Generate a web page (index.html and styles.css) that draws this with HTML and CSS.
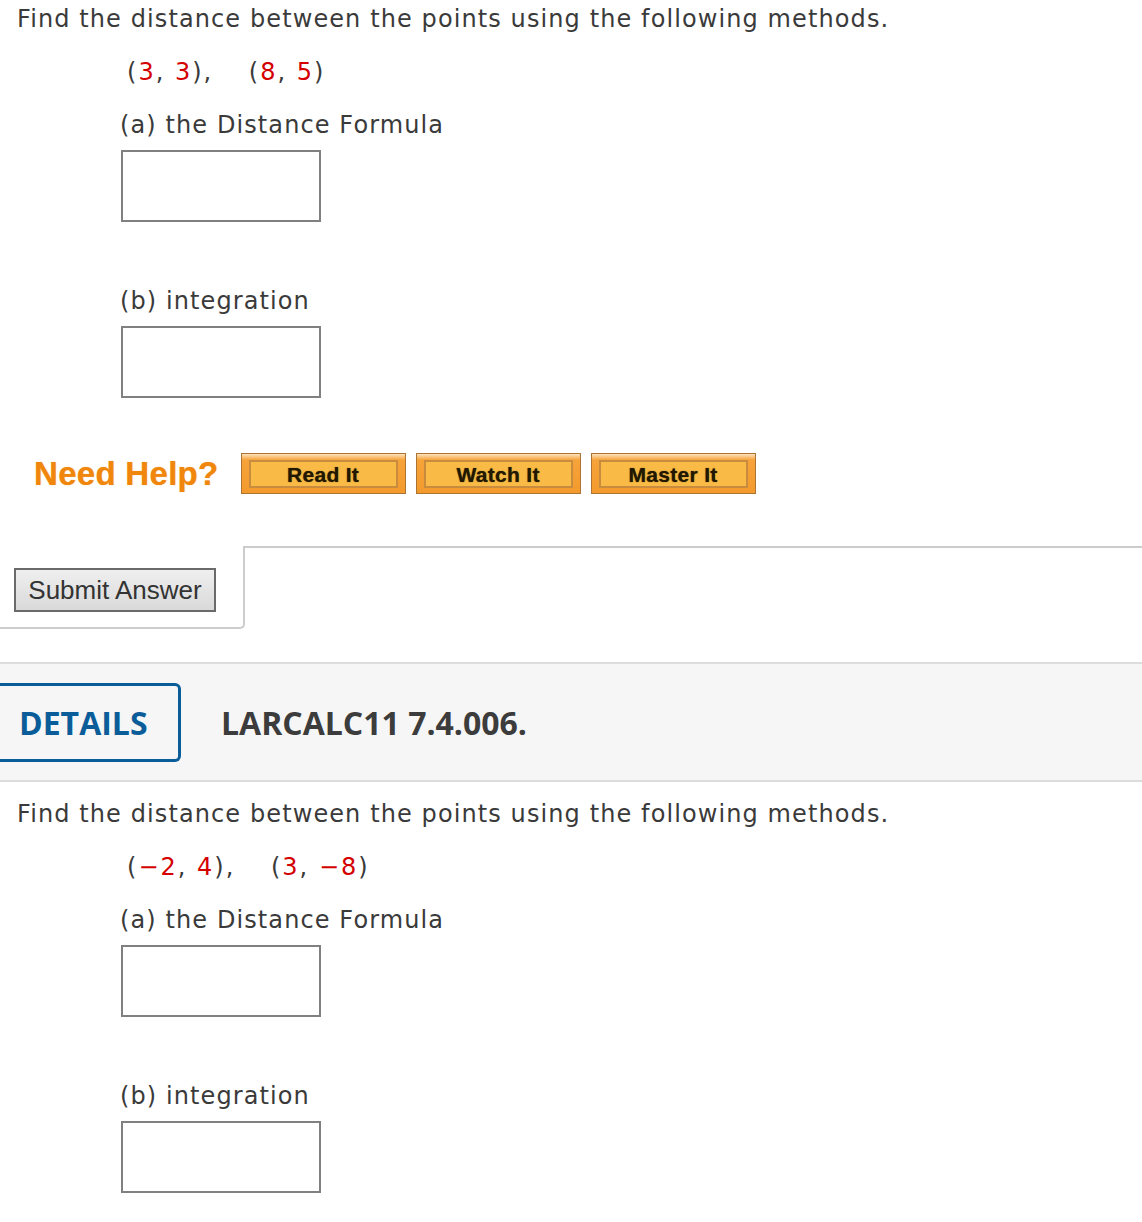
FILE: index.html
```html
<!DOCTYPE html>
<html lang="en">
<head>
  <meta charset="UTF-8" />
  <meta name="viewport" content="width=device-width, initial-scale=1.0" />
  <title>LARCALC11 7.4</title>
  <link rel="stylesheet" href="styles.css">
</head>
<body>
  <div class="question">
    <p class="prompt">Find the distance between the points using the following methods.</p>
    <div class="work">
      <p class="points">
        <span class="point">(<span class="num">3</span>, <span class="num">3</span>),</span>
        <span class="point">(<span class="num">8</span>, <span class="num">5</span>)</span>
      </p>
      <p class="part first">(a) the Distance Formula</p>
      <input type="text" class="answer" />
      <p class="part">(b) integration</p>
      <input type="text" class="answer" />
    </div>

    <div class="help">
      <span class="help-label">Need Help?</span>
      <button class="help-btn"><span>Read It</span></button>
      <button class="help-btn"><span>Watch It</span></button>
      <button class="help-btn"><span>Master It</span></button>
    </div>
  </div>

  <div class="submit-row">
    <div class="submit-cell">
      <button class="submit">Submit Answer</button>
    </div>
    <div class="submit-rest"></div>
  </div>

  <div class="question-head">
    <div class="details">DETAILS</div>
    <div class="qid">LARCALC11 7.4.006.</div>
  </div>

  <div class="question second">
    <p class="prompt">Find the distance between the points using the following methods.</p>
    <div class="work">
      <p class="points">
        <span class="point">(<span class="num">&minus;2</span>, <span class="num">4</span>),</span>
        <span class="point">(<span class="num">3</span>, <span class="num">&minus;8</span>)</span>
      </p>
      <p class="part first">(a) the Distance Formula</p>
      <input type="text" class="answer" />
      <p class="part">(b) integration</p>
      <input type="text" class="answer" />
    </div>
  </div>
</body>
</html>
```

FILE: styles.css
```css
body {
  margin: 0;
  font-family: "DejaVu Sans", Verdana, sans-serif;
  font-size: 24px;
  letter-spacing: 1.1px;
  color: #3a3a3a;
  background: #fff;
}
p {
  margin: 0;
  line-height: 30px;
}
.question {
  padding-top: 4px;
}
.question.second {
  padding-top: 17px;
}
.prompt {
  padding-left: 17px;
}
.work {
  padding-left: 120px;
}
.points {
  margin-top: 23px;
  padding-left: 7px;
  letter-spacing: 2px;
}
.point {
  margin-right: 26px;
}
.num {
  color: #d40000;
}
.part {
  margin-top: 64px;
}
.part.first {
  margin-top: 23px;
}
.answer {
  display: block;
  box-sizing: border-box;
  width: 200px;
  height: 72px;
  margin: 10px 0 0 1px;
  border: 2px solid #808080;
  background: #fff;
}
.help {
  display: flex;
  align-items: center;
  margin-top: 55px;
  padding-left: 34px;
  letter-spacing: 0;
}
.help-label {
  font-family: "Liberation Sans", Arial, sans-serif;
  font-weight: bold;
  font-size: 33px;
  letter-spacing: 0.3px;
  color: #f0870c;
  text-shadow: 0 0 1px rgba(240, 135, 12, 0.7);
  margin-right: 22px;
}
.help-btn {
  box-sizing: border-box;
  width: 165px;
  height: 41px;
  margin-right: 10px;
  padding: 6px 7px 5px;
  border: 1px solid #ad7332;
  background: linear-gradient(#fde2bd 0, #f6a33a 6px, #f39a2c 100%);
  cursor: pointer;
}
.help-btn span {
  display: block;
  height: 100%;
  box-sizing: border-box;
  border: 2px solid #c98b3e;
  background: #f9bb45;
  font-family: "Liberation Sans", Arial, sans-serif;
  font-weight: bold;
  font-size: 21px;
  line-height: 25px;
  letter-spacing: 0.3px;
  color: #221800;
  text-shadow: 0 0 1px rgba(40, 25, 0, 0.8);
}
.submit-row {
  display: flex;
  margin-top: 52px;
}
.submit-cell {
  padding: 20px 27px 15px 14px;
  border-right: 2px solid #cccccc;
  border-bottom: 2px solid #cccccc;
  border-bottom-right-radius: 5px;
}
.submit-rest {
  flex: 1;
  border-top: 2px solid #cccccc;
}
.submit {
  box-sizing: border-box;
  width: 202px;
  height: 44px;
  margin-top: 2px;
  border: 2px solid #6a6a6a;
  background: linear-gradient(#efefef, #d9d9d9);
  font-family: "Liberation Sans", Arial, sans-serif;
  font-size: 26px;
  letter-spacing: 0;
  color: #333;
  padding: 0;
  cursor: pointer;
}
.question-head {
  display: flex;
  align-items: center;
  margin-top: 33px;
  padding: 19px 0 18px;
  background: #f6f6f6;
  border-top: 2px solid #dddddd;
  border-bottom: 2px solid #dddddd;
  font-family: "Open Sans", sans-serif;
  font-weight: bold;
  font-size: 32px;
  letter-spacing: 0;
}
.details {
  box-sizing: border-box;
  width: 181px;
  height: 79px;
  line-height: 73px;
  padding-left: 19px;
  border: 3px solid #0b5d99;
  border-left: none;
  border-radius: 0 6px 6px 0;
  color: #0b5d99;
}
.qid {
  margin-left: 40px;
  color: #3c3c3c;
}
```
